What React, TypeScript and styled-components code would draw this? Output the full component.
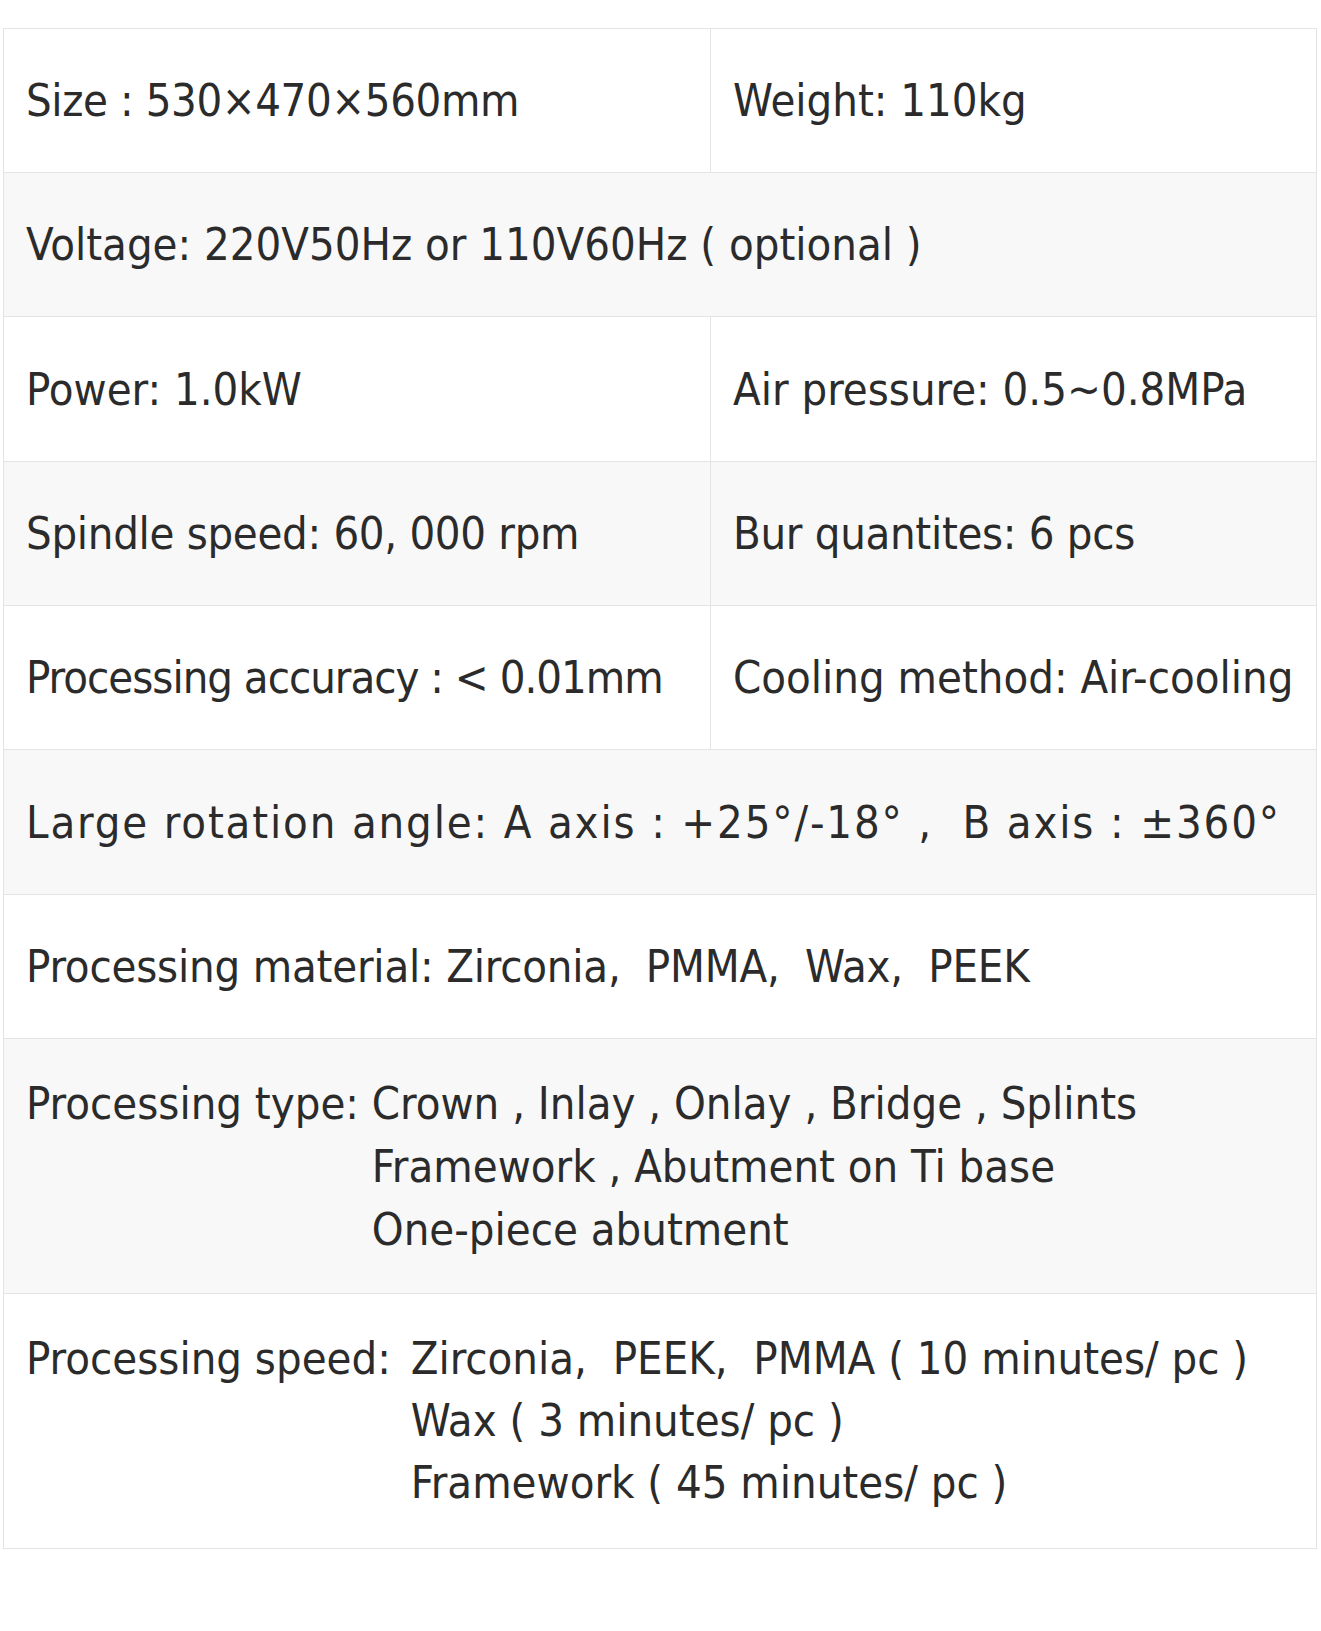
import styled, { createGlobalStyle } from "styled-components";

const GlobalStyle = createGlobalStyle`
  body {
    margin: 0;
    background: #ffffff;
  }
`;

const Page = styled.div`
  padding: 28px 0 0 3px;
  width: 1321px;
  height: 1631px;
  box-sizing: border-box;
`;

const Table = styled.div`
  width: 1314px;
  border-top: 1px solid #e4e4e4;
  border-left: 1px solid #e4e4e4;
  border-right: 1px solid #e4e4e4;
  box-sizing: border-box;
  font-family: "DejaVu Sans Condensed", "DejaVu Sans", sans-serif;
  font-stretch: condensed;
  font-size: 45px;
  color: #2b2b2b;
`;

const Row = styled.div<{ $shade?: boolean; $h: number; $split?: boolean }>`
  display: grid;
  grid-template-columns: ${(p) => (p.$split ? "706px 1fr" : "1fr")};
  height: ${(p) => p.$h}px;
  background: ${(p) => (p.$shade ? "#f8f8f8" : "#ffffff")};
  border-bottom: 1px solid #e4e4e4;
  box-sizing: border-box;
`;

const Cell = styled.div<{ $divider?: boolean; $spacing?: number }>`
  display: flex;
  align-items: center;
  padding-left: 22px;
  border-left: ${(p) => (p.$divider ? "1px solid #e4e4e4" : "none")};
  letter-spacing: ${(p) => p.$spacing ?? 0}px;
  white-space: pre;
`;

const Multi = styled.div`
  display: flex;
  align-items: flex-start;
`;

const Lines = styled.div<{ $lh: number; $indent?: number }>`
  display: flex;
  flex-direction: column;
  line-height: ${(p) => p.$lh}px;
  margin-left: ${(p) => p.$indent ?? 0}px;
`;

const Label = styled.span<{ $lh: number }>`
  line-height: ${(p) => p.$lh}px;
`;

export default function App() {
  return (
    <>
      <GlobalStyle />
      <Page>
        <Table>
          <Row $h={144} $split>
            <Cell $spacing={-0.4}>Size : 530×470×560mm</Cell>
            <Cell $divider>Weight: 110kg</Cell>
          </Row>
          <Row $h={144} $shade>
            <Cell>Voltage: 220V50Hz or 110V60Hz ( optional )</Cell>
          </Row>
          <Row $h={145} $split>
            <Cell>Power: 1.0kW</Cell>
            <Cell $divider>Air pressure: 0.5~0.8MPa</Cell>
          </Row>
          <Row $h={144} $split $shade>
            <Cell $spacing={-0.3}>Spindle speed: 60, 000 rpm</Cell>
            <Cell $divider $spacing={-0.3}>Bur quantites: 6 pcs</Cell>
          </Row>
          <Row $h={144} $split>
            <Cell $spacing={-1}>Processing accuracy : &lt; 0.01mm</Cell>
            <Cell $divider>Cooling method: Air-cooling</Cell>
          </Row>
          <Row $h={145} $shade>
            <Cell $spacing={1.85}>Large rotation angle: A axis : +25°/-18° ,  B axis : ±360°</Cell>
          </Row>
          <Row $h={144}>
            <Cell $spacing={-0.2}>Processing material: Zirconia,  PMMA,  Wax,  PEEK</Cell>
          </Row>
          <Row $h={255} $shade>
            <Cell>
              <Multi>
                <Label $lh={63}>Processing type: </Label>
                <Lines $lh={63}>
                  <span>Crown , Inlay , Onlay , Bridge , Splints</span>
                  <span>Framework , Abutment on Ti base</span>
                  <span>One-piece abutment</span>
                </Lines>
              </Multi>
            </Cell>
          </Row>
          <Row $h={255}>
            <Cell>
              <Multi>
                <Label $lh={62}>Processing speed: </Label>
                <Lines $lh={62} $indent={7}>
                  <span>Zirconia,  PEEK,  PMMA ( 10 minutes/ pc )</span>
                  <span>Wax ( 3 minutes/ pc )</span>
                  <span>Framework ( 45 minutes/ pc )</span>
                </Lines>
              </Multi>
            </Cell>
          </Row>
        </Table>
      </Page>
    </>
  );
}
